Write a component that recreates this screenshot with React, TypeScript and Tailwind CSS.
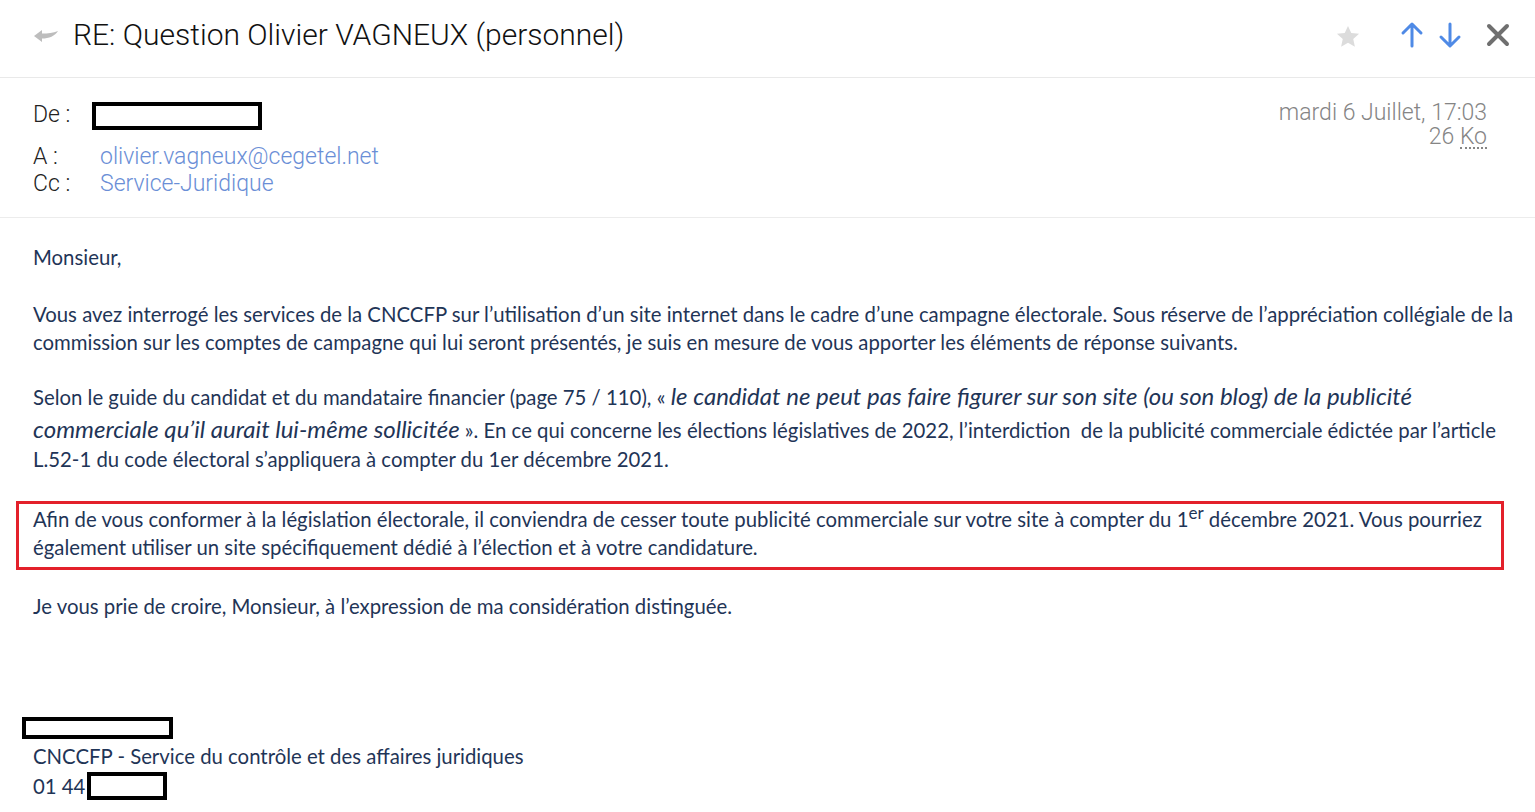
import React from "react";

const body = { fontFamily: "Lato, 'Open Sans', sans-serif" };
const head = { fontFamily: "Roboto, 'Liberation Sans', Arial, sans-serif" };

function Redact({ className }: { className: string }) {
  return <span className={"inline-block border-[4px] border-black bg-white align-middle " + className} />;
}

export default function App() {
  return (
    <div className="w-[1535px] h-[812px] bg-white overflow-hidden text-[#1f3557]" style={body}>
      {/* Title bar */}
      <div className="h-[78px] flex items-center border-b border-[#e9e9e9] pl-[33px] pr-[24px] pb-[7px]" style={head}>
        <svg width="26" height="16" viewBox="0 0 26 16" className="mr-[14px] mt-[2px]">
          <path d="M1 8 L9 2 L9 5.5 C15 5.5 20 5 25 3 C22 8 16 10.5 9 10.5 L9 14 Z" fill="#bdbdbd" />
        </svg>
        <div className="text-[30px] font-light text-[#111] leading-none">RE: Question Olivier VAGNEUX (personnel)</div>
        <div className="flex-1" />
        <svg width="28" height="28" viewBox="0 0 24 24" className="mr-[38px] mt-[4px]">
          <path d="M12 2.5l2.8 6.1 6.7.7-5 4.5 1.4 6.6L12 17l-5.9 3.4 1.4-6.6-5-4.5 6.7-.7z" fill="#dcdcdc" />
        </svg>
        <svg width="24" height="28" viewBox="0 0 24 28" className="mr-[14px]">
          <path d="M12 25V4 M3 12l9-9 9 9" stroke="#4f8ae6" strokeWidth="3" fill="none" strokeLinecap="round" strokeLinejoin="round" />
        </svg>
        <svg width="24" height="28" viewBox="0 0 24 28" className="mr-[24px]">
          <path d="M12 3v21 M3 16l9 9 9-9" stroke="#4f8ae6" strokeWidth="3" fill="none" strokeLinecap="round" strokeLinejoin="round" />
        </svg>
        <svg width="24" height="24" viewBox="0 0 24 24" className="mr-[1px]">
          <path d="M3 3l18 18 M21 3L3 21" stroke="#6f6f6f" strokeWidth="4" strokeLinecap="round" />
        </svg>
      </div>

      {/* Header fields */}
      <div className="h-[140px] border-b border-[#ececec] flex pl-[33px] pr-[48px] pt-[21px] font-light" style={head}>
        <div className="flex flex-col text-[23px] leading-[27px]">
          <div className="flex items-center h-[30px]">
            <span className="w-[59px] text-[#222]">De :</span>
            <Redact className="w-[170px] h-[28px] mt-[4px]" />
          </div>
          <div className="flex mt-[14px]">
            <span className="w-[67px] text-[#222]">A :</span>
            <span className="text-[#6a8ed6]">olivier.vagneux@cegetel.net</span>
          </div>
          <div className="flex">
            <span className="w-[67px] text-[#222]">Cc :</span>
            <span className="text-[#6a8ed6]">Service-Juridique</span>
          </div>
        </div>
        <div className="flex-1" />
        <div className="flex flex-col items-end text-[23px] leading-[25px] text-[#858585] mt-[1px]">
          <span>mardi 6 Juillet, 17:03</span>
          <span className="-mt-[1px]">
            26 <span className="border-b-2 border-dotted border-[#858585] leading-[20px] inline-block">Ko</span>
          </span>
        </div>
      </div>

      {/* Body */}
      <div className="pl-[33px] pt-[25px] text-[20.35px] leading-[28px] whitespace-nowrap">
        <p>Monsieur,</p>
        <p className="mt-[29px]">
          Vous avez interrogé les services de la CNCCFP sur l’utilisation d’un site internet dans le cadre d’une campagne électorale. Sous réserve de l’appréciation collégiale de la
          <br />
          commission sur les comptes de campagne qui lui seront présentés, je suis en mesure de vous apporter les éléments de réponse suivants.
        </p>
        <p className="mt-[24px] leading-[32px]">
          Selon le guide du candidat et du mandataire financier (page 75 / 110), «{" "}
          <em className="text-[24px]">le candidat ne peut pas faire figurer sur son site (ou son blog) de la publicité</em>
          <br />
          <em className="text-[24px]">commerciale qu’il aurait lui-même sollicitée</em> ». En ce qui concerne les élections législatives de 2022, l’interdiction&nbsp; de la publicité commerciale édictée par l’article
        </p>
        <p className="leading-[28px] -mt-[1px]">L.52-1 du code électoral s’appliquera à compter du 1er décembre 2021.</p>

        <div className="mt-[28px] -ml-[17px] w-[1488px] border-[3px] border-[#e3202a] pl-[14px] pt-[1px] pb-[6px] leading-[28px]">
          <div>
            Afin de vous conformer à la législation électorale, il conviendra de cesser toute publicité commerciale sur votre site à compter du 1
            <span className="text-[17px] relative -top-[8px] leading-none">er</span> décembre 2021. Vous pourriez
          </div>
          <div>également utiliser un site spécifiquement dédié à l’élection et à votre candidature.</div>
        </div>

        <p className="mt-[22px]">Je vous prie de croire, Monsieur, à l’expression de ma considération distinguée.</p>

        <div className="mt-[95px] -ml-[11px] leading-none">
          <Redact className="w-[151px] h-[22px]" />
        </div>
        <p className="mt-[3px]">CNCCFP - Service du contrôle et des affaires juridiques</p>
        <p className="flex items-center mt-[2px]">
          01 44<Redact className="ml-[2px] w-[80px] h-[28px]" />
        </p>
      </div>
    </div>
  );
}
